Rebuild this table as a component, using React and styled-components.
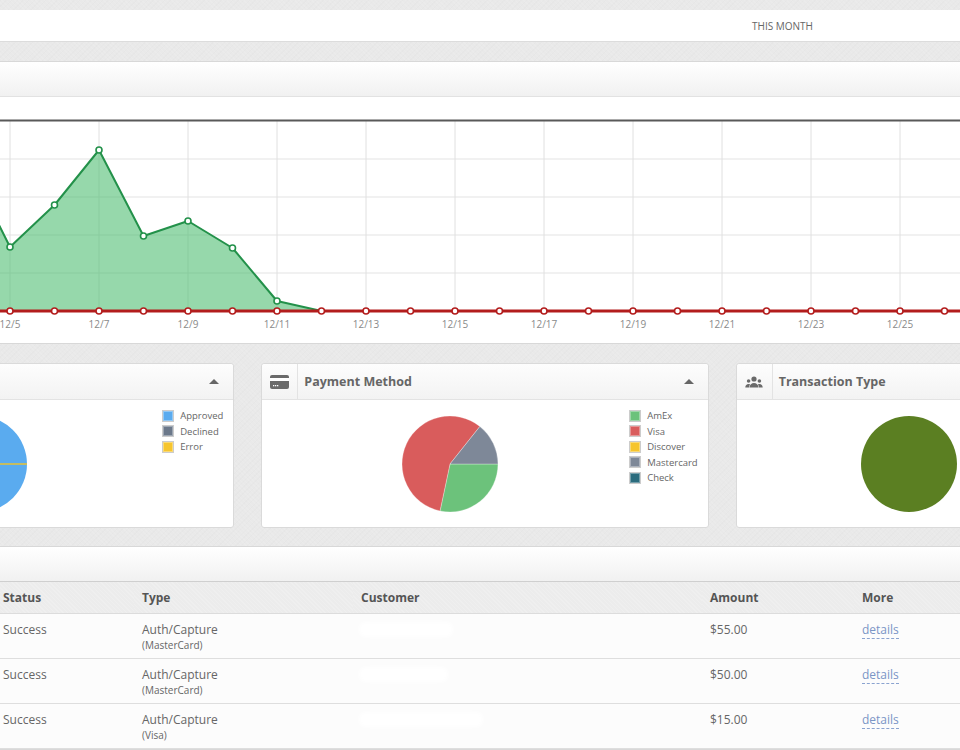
import React from 'react'
import styled, { createGlobalStyle } from 'styled-components'

const GlobalStyle = createGlobalStyle`
  html, body { margin:0; padding:0; }
  body{
    background-color:#e9e9e9;
    background-image:
      repeating-linear-gradient(45deg, rgba(255,255,255,.09) 0 1px, transparent 1px 3px),
      repeating-linear-gradient(-45deg, rgba(0,0,0,.012) 0 1px, transparent 1px 4px);
    font-family:"Open Sans", "Liberation Sans", sans-serif;
    color:#666;
  }
`;

const Viewport = styled.div`
  width:960px;
  height:750px;
  overflow:hidden;
`;

// the dashboard is wider than the window, its left side is scrolled away
const Canvas = styled.div`
  width:1396px;
  margin-left:-213px;
  padding-top:10px;
  display:flex;
  flex-direction:column;
`;

const TopBar = styled.div`
  height:31px;
  background:#fff;
  border-bottom:1px solid #dcdcdc;
  display:flex;
  align-items:center;
  padding-left:965px;
`;

const Tab = styled.span`
  font-size:10px;
  color:#666;
  text-transform:uppercase;
`;

const Panel = styled.div`
  margin-top:${p => p.$gap}px;
  background:#fff;
  border-top:1px solid #d8d8d8;
  border-bottom:1px solid #d8d8d8;
`;

const PanelHead = styled.div`
  height:${p => p.$h}px;
  background:linear-gradient(#ffffff, #f1f1f1);
  border-bottom:1px solid ${p => p.$line || '#e2e2e2'};
`;

const ChartBody = styled.div`
  height:246px;
  svg{ display:block; }
`;

const WidgetRow = styled.div`
  margin-top:19px;
  display:grid;
  grid-template-columns:repeat(3, 1fr);
  gap:27px;
`;

const Widget = styled.div`
  background:#fff;
  border:1px solid #dadada;
  border-radius:3px;
  height:163px;
  display:flex;
  flex-direction:column;
`;

const WidgetHead = styled.div`
  height:35px;
  display:flex;
  align-items:center;
  background:linear-gradient(#fdfdfd, #f3f3f3);
  border-bottom:1px solid #e3e3e3;
  border-radius:3px 3px 0 0;
`;

const IconBox = styled.div`
  width:35px;
  height:35px;
  display:flex;
  align-items:center;
  justify-content:center;
  border-right:1px solid #e3e3e3;
`;

const Title = styled.h4`
  margin:0 0 0 6px;
  flex:1;
  font-size:12.5px;
  font-weight:700;
  color:#666;
`;

const Caret = styled.span`
  width:0;
  height:0;
  margin-right:14px;
  border-left:5px solid transparent;
  border-right:5px solid transparent;
  border-bottom:5px solid #666;
`;

const WidgetBody = styled.div`
  flex:1;
  display:flex;
`;

const PieArea = styled.div`
  flex:1;
  padding-left:8px;
  display:flex;
  align-items:center;
  justify-content:center;
`;

const Legend = styled.ul`
  list-style:none;
  margin:0;
  padding:8px 10px 0 0;
  min-width:${p => p.$min || 0}px;
`;

const LegendItem = styled.li`
  display:flex;
  align-items:center;
  gap:6px;
  height:15.5px;
  font-size:9.5px;
  color:#666;
`;

const Swatch = styled.span`
  width:10px;
  height:10px;
  border:1px solid #ccc;
  background:${p => p.$color};
  box-shadow:inset 0 0 0 1px rgba(255,255,255,.35);
`;

const Table = styled.table`
  width:100%;
  table-layout:fixed;
  border-collapse:collapse;
  font-size:12px;
`;

const HeadCell = styled.th`
  height:31px;
  padding:0 8px;
  text-align:left;
  font-weight:700;
  color:#555;
  background-color:#ececec;
  background-image:repeating-linear-gradient(45deg, rgba(255,255,255,.15) 0 1px, transparent 1px 3px);
  border-bottom:1px solid #dcdcdc;
`;

const Row = styled.tr`
  background:#fcfcfc;
  td{
    height:37px;
    padding:7px 8px 0;
    vertical-align:top;
    border-bottom:1px solid #dedede;
    color:#666;
    line-height:18px;
  }
`;

const Sub = styled.div`
  font-size:10px;
  line-height:13px;
`;

const Redacted = styled.span`
  display:block;
  margin-top:3px;
  width:${p => p.$w}px;
  height:11px;
  background:#fff;
  border-radius:5px;
  box-shadow:0 0 4px 2px #fff;
`;

const Details = styled.a`
  color:#7a95c6;
  text-decoration:none;
  border-bottom:1px dashed #8aa3d0;
`;

/* ---------- drawings ---------- */

const CardIcon = () => (
  <svg width="19" height="14" viewBox="0 0 19 14">
    <rect x="0" y="0" width="19" height="14" rx="2" fill="#6a6a6a" />
    <rect x="0" y="3" width="19" height="3" fill="#fff" />
    <rect x="3" y="10" width="1.3" height="1.3" fill="#fff" />
    <rect x="5" y="10" width="1.3" height="1.3" fill="#fff" />
    <rect x="7" y="10" width="1.3" height="1.3" fill="#fff" />
  </svg>
);

const UsersIcon = () => (
  <svg width="18" height="12" viewBox="0 0 18 12" fill="#6a6a6a">
    <circle cx="9" cy="3" r="2.6" />
    <path d="M4.6 11.5c0-3 2-4.6 4.4-4.6s4.4 1.6 4.4 4.6z" />
    <circle cx="3.6" cy="5" r="1.8" />
    <path d="M0.3 11.5c0-2.3 1.4-3.6 3.3-3.6 0.9 0 1.5 0.3 1.5 0.3-0.6 0.9-0.9 2-0.9 3.3z" />
    <circle cx="14.4" cy="5" r="1.8" />
    <path d="M17.7 11.5c0-2.3-1.4-3.6-3.3-3.6-0.9 0-1.5 0.3-1.5 0.3 0.6 0.9 0.9 2 0.9 3.3z" />
  </svg>
);

const slice = (cx, cy, r, a0, a1) => {
  const rad = a => (a * Math.PI) / 180;
  const x0 = cx + r * Math.cos(rad(a0)), y0 = cy + r * Math.sin(rad(a0));
  const x1 = cx + r * Math.cos(rad(a1)), y1 = cy + r * Math.sin(rad(a1));
  const large = a1 - a0 > 180 ? 1 : 0;
  return `M${cx} ${cy}L${x0} ${y0}A${r} ${r} 0 ${large} 1 ${x1} ${y1}Z`;
};

const Pie = ({ slices, marker }) => (
  <svg width="98" height="98" viewBox="0 0 98 98">
    {slices.length === 1
      ? <circle cx="49" cy="49" r="48" fill={slices[0].color} />
      : slices.map(s => (
        <path key={s.color} d={slice(49, 49, 48, s.from, s.to)} fill={s.color}
          stroke="rgba(255,255,255,.5)" strokeWidth="0.6" />
      ))}
    {marker && <line x1="49" y1="49" x2="97" y2="49" stroke={marker} strokeWidth="1.6" />}
  </svg>
);

const STEP = 44.5;
const X0 = -34.5;
const BASE = 311;
const green = [158, 247, 205, 150, 236, 221, 248, 301];
// December 4 .. December 31
const pts = Array.from({ length: 28 }, (_, k) => ({
  x: X0 + STEP * k,
  g: green[k] !== undefined ? green[k] : BASE,
  day: 4 + k,
}));

const SalesChart = () => {
  const line = pts.map(p => `${p.x},${p.g}`).join(' ');
  const area = `${pts[0].x},${BASE} ${line} ${pts[pts.length - 1].x},${BASE}`;
  const ticks = pts.filter(p => p.day % 2 === 1);
  // only the labels that fit inside the visible window
  const labels = ticks.filter(p => p.x > -200 && p.x + 14 < 960);
  return (
    <svg width="1396" height="246" viewBox="-213 97 1396 246">
      {[159, 197, 235, 273].map(y => (
        <line key={y} x1="-213" x2="1183" y1={y} y2={y} stroke="#e3e3e3" strokeWidth="1" />
      ))}
      {ticks.map(p => (
        <line key={p.day} x1={p.x} x2={p.x} y1="121" y2={BASE} stroke="#e0e0e0" strokeWidth="1" />
      ))}
      <line x1="-213" x2="1183" y1="120.5" y2="120.5" stroke="#595959" strokeWidth="2" />
      <polygon points={area} fill="rgba(80,190,115,.6)" />
      <polyline points={line} fill="none" stroke="#23914a" strokeWidth="2" strokeLinejoin="round" />
      {pts.filter(p => p.g < BASE).map(p => (
        <circle key={p.x} cx={p.x} cy={p.g} r="3" fill="#fff" stroke="#23914a" strokeWidth="1.6" />
      ))}
      <line x1="-213" x2="1183" y1={BASE} y2={BASE} stroke="#b31d1d" strokeWidth="3" />
      {pts.map(p => (
        <circle key={'r' + p.x} cx={p.x} cy={BASE} r="3" fill="#fff" stroke="#b31d1d" strokeWidth="1.6" />
      ))}
      {labels.map(p => (
        <text key={'t' + p.day} x={p.x} y="328" textAnchor="middle" fontSize="10"
          fontFamily='"Open Sans", sans-serif' fill="#8a8a8a">{`12/${p.day}`}</text>
      ))}
    </svg>
  );
};

const widgets = [
  {
    title: 'Transaction Status', icon: null,
    slices: [{ color: '#5aabef', from: 0, to: 360 }], marker: '#e9c232',
    legend: [['Approved', '#5aabef'], ['Declined', '#6b788a'], ['Error', '#f6c52e']],
  },
  {
    title: 'Payment Method', icon: <CardIcon />,
    slices: [
      { color: '#6cc27b', from: 0, to: 102 },
      { color: '#d95c5c', from: 102, to: 308.5 },
      { color: '#7e8898', from: 308.5, to: 360 },
    ],
    legend: [['AmEx', '#6cc27b'], ['Visa', '#d95c5c'], ['Discover', '#f6c52e'], ['Mastercard', '#7e8898'], ['Check', '#2b6c7e']],
  },
  {
    title: 'Transaction Type', icon: <UsersIcon />, legendMin: 99,
    slices: [{ color: '#5b7f22', from: 0, to: 360 }],
    legend: [['Auth/Capture', '#5b7f22']],
  },
];

const rows = [
  { amount: '$55.00', card: 'MasterCard', w: 90 },
  { amount: '$50.00', card: 'MasterCard', w: 85 },
  { amount: '$15.00', card: 'Visa', w: 120 },
];

const App = () => (
  <>
    <GlobalStyle />
    <Viewport>
      <Canvas>
        <TopBar><Tab>This Month</Tab></TopBar>

        <Panel $gap={19}>
          <PanelHead $h={34} />
          <ChartBody><SalesChart /></ChartBody>
        </Panel>

        <WidgetRow>
          {widgets.map(w => (
            <Widget key={w.title}>
              <WidgetHead>
                <IconBox>{w.icon}</IconBox>
                <Title>{w.title}</Title>
                <Caret />
              </WidgetHead>
              <WidgetBody>
                <PieArea><Pie slices={w.slices} marker={w.marker} /></PieArea>
                <Legend $min={w.legendMin}>
                  {w.legend.map(([name, color]) => (
                    <LegendItem key={name}><Swatch $color={color} />{name}</LegendItem>
                  ))}
                </Legend>
              </WidgetBody>
            </Widget>
          ))}
        </WidgetRow>

        <Panel $gap={18}>
          <PanelHead $h={34} $line="#cfcfcf" />
          <Table>
            <colgroup>
              <col style={{ width: 208 }} />
              <col style={{ width: 139 }} />
              <col style={{ width: 219 }} />
              <col style={{ width: 349 }} />
              <col style={{ width: 152 }} />
              <col />
            </colgroup>
            <thead>
              <tr>
                <HeadCell />
                <HeadCell>Status</HeadCell>
                <HeadCell>Type</HeadCell>
                <HeadCell>Customer</HeadCell>
                <HeadCell>Amount</HeadCell>
                <HeadCell>More</HeadCell>
              </tr>
            </thead>
            <tbody>
              {rows.map((r, i) => (
                <Row key={i}>
                  <td />
                  <td>Success</td>
                  <td>Auth/Capture<Sub>({r.card})</Sub></td>
                  <td><Redacted $w={r.w} /></td>
                  <td>{r.amount}</td>
                  <td><Details href="#">details</Details></td>
                </Row>
              ))}
            </tbody>
          </Table>
        </Panel>
      </Canvas>
    </Viewport>
  </>
);

export default App
